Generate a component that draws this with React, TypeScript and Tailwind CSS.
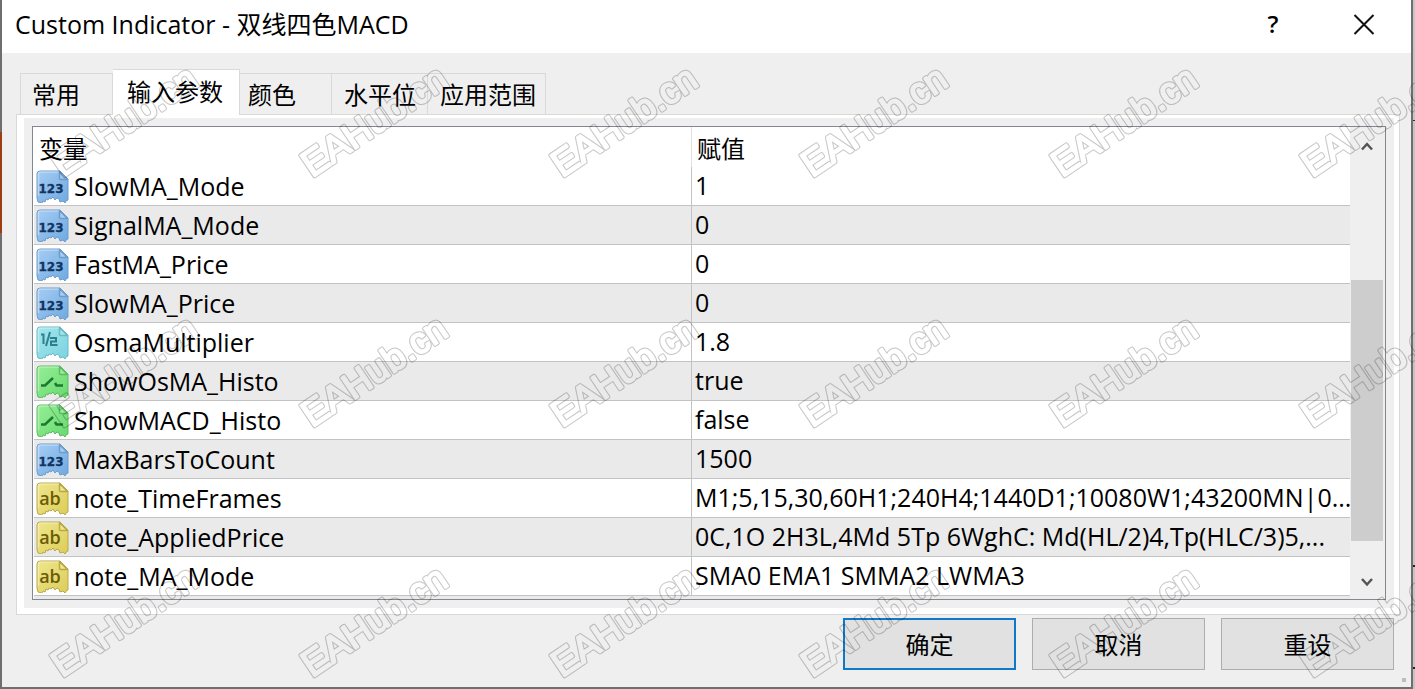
import { useState } from 'react';
import clsx from 'clsx';

type ParamType = 'int' | 'double' | 'bool' | 'string';

interface Param {
  name: string;
  value: string;
  type: ParamType;
}

const tabs = [
  { label: '常用', className: 'w-[93px] pl-[11px]' },
  { label: '输入参数', className: 'w-[127px] pl-[14px]' },
  { label: '颜色', className: 'w-[92px] pl-2' },
  { label: '水平位', className: 'w-[96px] pl-3' },
  { label: '应用范围', className: 'w-[118px] pl-3' },
];

const params: Param[] = [
  { name: 'SlowMA_Mode', value: '1', type: 'int' },
  { name: 'SignalMA_Mode', value: '0', type: 'int' },
  { name: 'FastMA_Price', value: '0', type: 'int' },
  { name: 'SlowMA_Price', value: '0', type: 'int' },
  { name: 'OsmaMultiplier', value: '1.8', type: 'double' },
  { name: 'ShowOsMA_Histo', value: 'true', type: 'bool' },
  { name: 'ShowMACD_Histo', value: 'false', type: 'bool' },
  { name: 'MaxBarsToCount', value: '1500', type: 'int' },
  {
    name: 'note_TimeFrames',
    value: 'M1;5,15,30,60H1;240H4;1440D1;10080W1;43200MN|0...',
    type: 'string',
  },
  {
    name: 'note_AppliedPrice',
    value: '0C,1O 2H3L,4Md 5Tp 6WghC: Md(HL/2)4,Tp(HLC/3)5,...',
    type: 'string',
  },
  { name: 'note_MA_Mode', value: 'SMA0 EMA1 SMMA2 LWMA3', type: 'string' },
];

const iconColors = {
  int: { from: '#a6cdf4', to: '#6fa9e0', edge: '#6c9ccb', ink: '#12355f' },
  double: { from: '#a3e6ec', to: '#7bd3df', edge: '#69b9c6', ink: '#1c6f80' },
  bool: { from: '#97ee97', to: '#66da6d', edge: '#5cbb62', ink: '#1c7a30' },
  string: { from: '#efe68c', to: '#dccd58', edge: '#b8a848', ink: '#6b5c08' },
};

const ParamIcon = ({ type }: { type: ParamType }) => {
  const color = iconColors[type];

  return (
    <svg width="33" height="33" viewBox="0 0 33 33" className="block shrink-0">
      <defs>
        <linearGradient id={`paper-${type}`} x1="0" y1="0" x2="1" y2="1">
          <stop offset="0" stopColor={color.from} />
          <stop offset="1" stopColor={color.to} />
        </linearGradient>
      </defs>
      <path
        d="M4 1h20l8 8v21l-2 1-1 2-2-2-3 1-1-3-2-1-2 2-2-3-2 2-2-1-1 2-2-1-1 3-2-1-1 2-4-1L1 28V4q0-3 3-3z"
        fill={`url(#paper-${type})`}
        stroke={color.edge}
        strokeWidth="1"
        strokeLinejoin="round"
      />
      <path
        d="M2.500 26V4q0-2 2-2H23"
        fill="none"
        stroke="#fff"
        strokeOpacity="0.35"
        strokeWidth="1.500"
      />
      <path
        d="M23.500 1.500v7q0 1 1 1h7z"
        fill={color.from}
        stroke={color.edge}
        strokeWidth="1.500"
        strokeLinejoin="round"
      />
      {type === 'int' && (
        <text
          x="15"
          y="23"
          textAnchor="middle"
          fontSize="12"
          fontWeight="700"
          fontFamily="DejaVu Sans, sans-serif"
          fill={color.ink}
          stroke={color.ink}
          strokeWidth="0.300"
        >
          123
        </text>
      )}
      {type === 'double' && (
        <g fill="none" stroke={color.ink} strokeOpacity="0.85" strokeWidth="2">
          <path d="M5 8.500h2.500V18" />
          <path d="M14 6l-4 14" />
          <path d="M14 12h6v3.500h-5V19h6.500" />
        </g>
      )}
      {type === 'bool' && (
        <path
          d="M5 20.500h4l8-7.500M19 18l1.500 2.500H27"
          fill="none"
          stroke={color.ink}
          strokeWidth="2.500"
        />
      )}
      {type === 'string' && (
        <text
          x="14"
          y="23"
          textAnchor="middle"
          fontSize="18"
          fontWeight="600"
          fontFamily="Open Sans, sans-serif"
          fill={color.ink}
        >
          ab
        </text>
      )}
    </svg>
  );
};

// Outlined, rounded lettering repeated every 250px in both directions
const Watermark = () => {
  const columns = [62, 312, 562, 812, 1062, 1312];
  const rows = [178, 428, 678];

  const marks = (stroke: string, strokeWidth: number) =>
    rows.map((y) =>
      columns.map((x) => (
        <text
          key={`${x}-${y}`}
          transform={`translate(${x} ${y}) rotate(-34)`}
          fontSize="37"
          fontFamily="Liberation Sans, Arial, sans-serif"
          fill={stroke}
          stroke={stroke}
          strokeWidth={strokeWidth}
          strokeLinejoin="round"
        >
          EAHub.cn
        </text>
      )),
    );

  return (
    <svg
      aria-hidden="true"
      className="absolute inset-0 z-20 w-full h-full pointer-events-none"
    >
      <mask
        id="watermark"
        maskUnits="userSpaceOnUse"
        x="0"
        y="0"
        width="100%"
        height="100%"
      >
        {marks('#fff', 4)}
        {marks('#000', 2)}
      </mask>
      <rect
        width="100%"
        height="100%"
        fill="#000"
        fillOpacity="0.22"
        mask="url(#watermark)"
      />
    </svg>
  );
};

const ScrollBar = () => (
  <div className="flex flex-col w-[35px] shrink-0 pl-px pr-[2px] bg-[#efefef]">
    <button aria-label="Scroll up" className="flex justify-center h-10 pt-3">
      <svg width="14" height="14" viewBox="0 0 14 14" className="block">
        <path d="M2 10.500l5-5.500 5 5.500" fill="none" stroke="#555" strokeWidth="2.500" />
      </svg>
    </button>
    <div className="flex flex-col flex-1">
      <div className="basis-0 grow-[113]" />
      <div className="basis-0 grow-[261] bg-[#cdcdcd]" />
      <div className="basis-0 grow-[18]" />
    </div>
    <button
      aria-label="Scroll down"
      className="flex items-end justify-center h-10 pb-[10px]"
    >
      <svg width="14" height="14" viewBox="0 0 14 14" className="block">
        <path d="M2 4l5 5.500 5-5.500" fill="none" stroke="#555" strokeWidth="2.500" />
      </svg>
    </button>
  </div>
);

const ParamsTable = () => (
  <div className="flex border border-[#828790] bg-white">
    <div className="flex-1 min-w-0 pl-px">
      <table className="w-full table-fixed border-separate border-spacing-0">
        <thead>
          <tr className="h-10 text-left">
            <th className="w-1/2 p-0 pl-[5px] pt-1 font-normal border-r border-[#e0e0e0]">
              变量
            </th>
            <th className="p-0 pl-[5px] pt-1 font-normal">赋值</th>
          </tr>
        </thead>
        <tbody className="text-[25px]">
          {params.map((param) => (
            <tr key={param.name} className="h-[39px] even:bg-[#eaeaea]">
              <td className="p-0 pl-[2px] border-r border-b border-[#c3c3c3]">
                <div className="flex items-center h-[38px] gap-[5px]">
                  <ParamIcon type={param.type} />
                  <span>{param.name}</span>
                </div>
              </td>
              <td className="p-0 pl-[3px] border-b border-[#c3c3c3]">
                <div className="h-[38px] leading-[37px] whitespace-nowrap">
                  {param.value}
                </div>
              </td>
            </tr>
          ))}
        </tbody>
      </table>
      <div className="h-[3px] bg-[#eaeaea]" />
    </div>
    <ScrollBar />
  </div>
);

const DialogButton = ({
  label,
  primary = false,
}: {
  label: string;
  primary?: boolean;
}) => (
  <button
    className={clsx(
      'w-[173px] h-[52px] pt-px bg-[#e1e1e1]',
      primary ? 'border-2 border-[#0f78c8]' : 'border border-[#adadad]',
    )}
  >
    {label}
  </button>
);

export default function App() {
  const [activeTab, setActiveTab] = useState('输入参数');

  return (
    <div className="relative flex min-h-screen overflow-hidden bg-[#c4c6c6] font-['Open_Sans','Noto_Sans_CJK_SC',sans-serif] text-2xl leading-8 text-black">
      <div className="flex flex-col w-[2px] shrink-0 bg-[#6e6e6e]">
        <div className="h-[132px]" />
        <div className="h-[101px] bg-[#9c3d14]" />
      </div>

      <div className="flex flex-col flex-1 min-w-0 bg-[#efefef] border-r-2 border-b-2 border-[#6e7070]">
        <header className="flex items-center justify-between h-[53px] pl-[13px] pr-[34px] pb-[6px] bg-white">
          <h1 className="text-[25px]">Custom Indicator - 双线四色MACD</h1>
          <div className="flex items-center gap-[68px]">
            <button aria-label="Help" className="w-5 font-semibold">
              ?
            </button>
            <button aria-label="Close" className="w-[26px]">
              <svg width="26" height="26" viewBox="0 0 26 26" className="block">
                <path d="M3.500 4l19 19M22.500 4l-19 19" stroke="#111" strokeWidth="2" />
              </svg>
            </button>
          </div>
        </header>

        <div role="tablist" className="flex items-end h-[62px] pl-[18px]">
          {tabs.map((tab) => {
            const active = tab.label === activeTab;

            return (
              <button
                key={tab.label}
                role="tab"
                aria-selected={active}
                onClick={() => setActiveTab(tab.label)}
                className={clsx(
                  'text-left whitespace-nowrap border-[#d9d9d9] border-t border-r first:border-l',
                  tab.className,
                  active ? 'h-[46px] bg-white pb-px z-10' : 'h-[42px] pt-px',
                )}
              >
                {tab.label}
              </button>
            );
          })}
        </div>

        <main className="-mt-px ml-[14px] mr-[11px] pt-[3px] pr-[5px] pb-[6px] pl-[7px] bg-white border border-[#d9d9d9]">
          <div className="p-2 bg-[#efefef]">
            <ParamsTable />
          </div>
        </main>

        <footer className="flex justify-end gap-4 pt-[3px] pr-[17px]">
          <DialogButton label="确定" primary />
          <DialogButton label="取消" />
          <DialogButton label="重设" />
        </footer>
        <div className="flex justify-end pt-2 pr-[5px]">
          <span className="w-1 h-1 bg-[#bdbdbd]" />
        </div>
      </div>

      <div className="flex flex-col w-[2px] shrink-0">
        <div className="h-[121px] border-b border-[#333]" />
        <div className="h-[446px] border-b-2 border-[#222]" />
        <div className="h-[102px] border-b-2 border-[#222]" />
      </div>

      <Watermark />
    </div>
  );
}
